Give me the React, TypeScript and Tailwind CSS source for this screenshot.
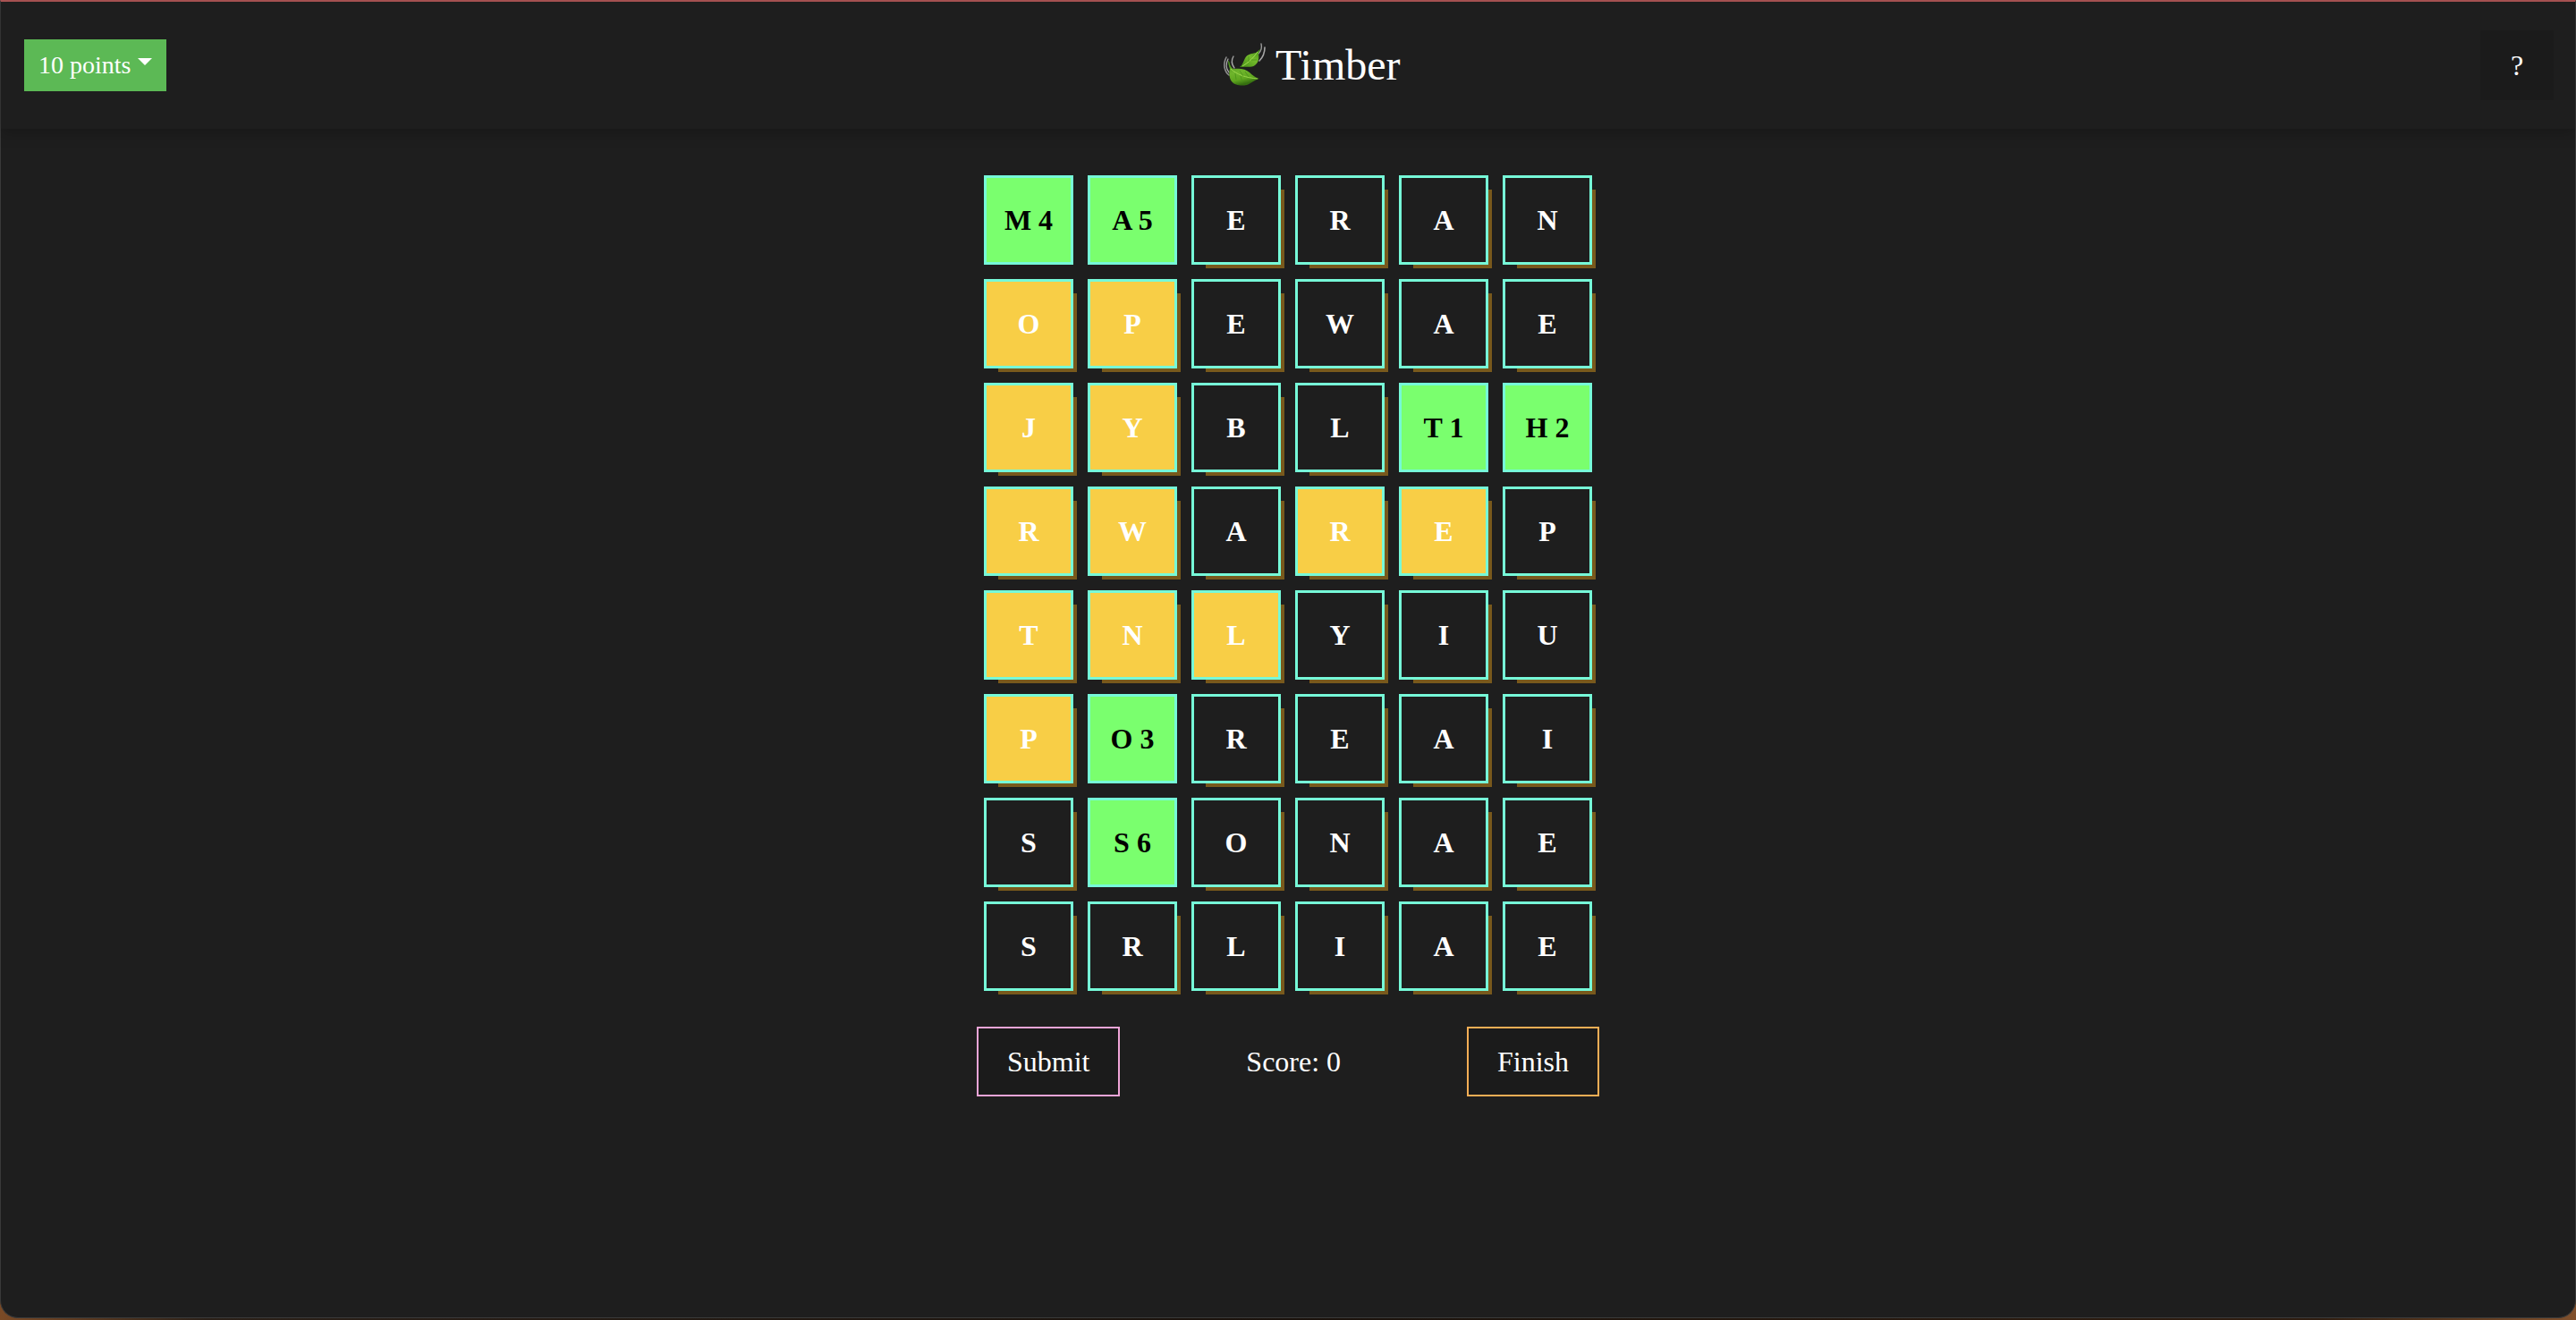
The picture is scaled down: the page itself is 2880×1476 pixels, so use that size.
const BOARD: string[][] = [
  ["M 4", "A 5", "E", "R", "A", "N"],
  ["O", "P", "E", "W", "A", "E"],
  ["J", "Y", "B", "L", "T 1", "H 2"],
  ["R", "W", "A", "R", "E", "P"],
  ["T", "N", "L", "Y", "I", "U"],
  ["P", "O 3", "R", "E", "A", "I"],
  ["S", "S 6", "O", "N", "A", "E"],
  ["S", "R", "L", "I", "A", "E"],
];

/** Tiles that can be picked next, as "row-column". */
const REACHABLE = new Set([
  "1-0", "1-1", "2-0", "2-1", "3-0", "3-1", "3-3", "3-4", "4-0", "4-1", "4-2", "5-0",
]);

function Leaf() {
  return (
    <svg viewBox="0 0 60 60" className="size-15" aria-hidden="true">
      <defs>
        <linearGradient id="leafBig" x1="0" y1="0" x2="0.3" y2="1">
          <stop offset="0" stopColor="#3f8a16" />
          <stop offset="0.5" stopColor="#6fb52c" />
          <stop offset="0.8" stopColor="#5fa61f" />
          <stop offset="1" stopColor="#356f10" />
        </linearGradient>
        <linearGradient id="leafSmall" x1="1" y1="0" x2="0.2" y2="1">
          <stop offset="0" stopColor="#3f8a16" />
          <stop offset="0.5" stopColor="#74bb2c" />
          <stop offset="1" stopColor="#4d951a" />
        </linearGradient>
      </defs>
      <g fill="none" strokeLinecap="round">
        <path d="M9 21C5 29 7 37 12 41" stroke="#8b8b8b" strokeWidth="1.6" />
        <path d="M11 23C8 29 9 34 12 38" stroke="#b0b0b0" strokeWidth="1.2" />
        <path d="M17 20C14 25 15 29 18 33" stroke="#a5a5a5" strokeWidth="1.4" />
        <path d="M48 6C49 10 48 14 45 17" stroke="#9a9a9a" strokeWidth="1.4" />
        <path d="M52 10C52 17 50 21 46 25" stroke="#a5a5a5" strokeWidth="1.6" />
      </g>
      <path
        d="M11 25C12 25 13 27 13 29C14 32 16 34 18 34C24 33 31 34 35 38C38 41 42 44 46 45C41 46 37 50 32 52C26 53 19 53 15 48C12 44 12 38 13 34C12 31 11 28 11 25Z"
        fill="url(#leafBig)"
      />
      <path d="M14 34C20 40 31 44 44 45" fill="none" stroke="#9bd64c" strokeWidth="1" />
      <path
        d="M19 39L20 46M25 42L27 49M24 36L28 42M30 37L34 43"
        fill="none"
        stroke="#4a931b"
        strokeWidth="0.8"
      />
      <path
        d="M24 32C27 30 28 26 30 22C33 17 38 17 42 16C44 15 45 13 47 12C47 14 45 15 45 17C46 22 45 27 41 30C37 33 31 31 24 32Z"
        fill="url(#leafSmall)"
      />
      <path d="M27 31C34 27 39 22 44 15" fill="none" stroke="#a2dc55" strokeWidth="1" />
      <path d="M34 26L34 20M37 24L43 24" fill="none" stroke="#4a931b" strokeWidth="0.8" />
    </svg>
  );
}

function Tile({ label, reachable }: { label: string; reachable: boolean }) {
  const picked = label.length > 1;
  const look = picked
    ? "bg-[#7aff6e] text-black"
    : reachable
      ? "bg-[#f8ce46] text-white shadow-[10px_10px_0_-6px_#78591c]"
      : "text-white shadow-[10px_10px_0_-6px_#78591c]";
  return (
    <button
      type="button"
      className={`size-25 border-3 border-[#76f9d8] text-[32px] leading-10 font-bold ${look}`}
    >
      {label}
    </button>
  );
}

export default function App() {
  return (
    <div className="bg-[linear-gradient(to_right,#7a4a26,#2a2018_8%,#1a120c_50%,#2e1d10_90%,#80502c)] pb-0.5 font-['Liberation_Serif',serif] text-white">
      <div className="flex min-h-[calc(100vh-2px)] flex-col rounded-b-[20px] border border-t-2 border-[#3a3a3a] border-t-[#b15757] bg-[#1e1e1e]">
        <header className="flex h-[142px] items-center justify-between pr-6 pl-[26px] shadow-[0_4px_16px_rgba(0,0,0,0.25)]">
          <button
            type="button"
            className="flex h-[58px] items-center gap-2 bg-[#5cb955] px-4 text-[28px] leading-10"
          >
            10 points
            <span className="mb-2 border-x-8 border-t-8 border-x-transparent border-t-white" />
          </button>
          <h1 className="flex items-center gap-1 text-[48px] leading-15">
            <Leaf />
            Timber
          </h1>
          <button
            type="button"
            aria-label="Help"
            className="ml-8 h-[78px] w-[82px] bg-[#1b1b1b] text-[32px] leading-10"
          >
            ?
          </button>
        </header>

        <main className="flex flex-col items-center pt-[52px]">
          <div className="grid grid-cols-6 gap-4">
            {BOARD.map((row, r) =>
              row.map((label, c) => (
                <Tile key={`${r}-${c}`} label={label} reachable={REACHABLE.has(`${r}-${c}`)} />
              )),
            )}
          </div>
          <div className="mt-10 flex w-full max-w-[696px] items-center justify-between text-[32px] leading-10">
            <button type="button" className="h-[78px] border-2 border-[#f0a5d8] bg-[#1b1b1b] px-8">
              Submit
            </button>
            <p>Score: 0</p>
            <button type="button" className="h-[78px] border-2 border-[#f5ae55] bg-[#1b1b1b] px-8">
              Finish
            </button>
          </div>
        </main>
      </div>
    </div>
  );
}
